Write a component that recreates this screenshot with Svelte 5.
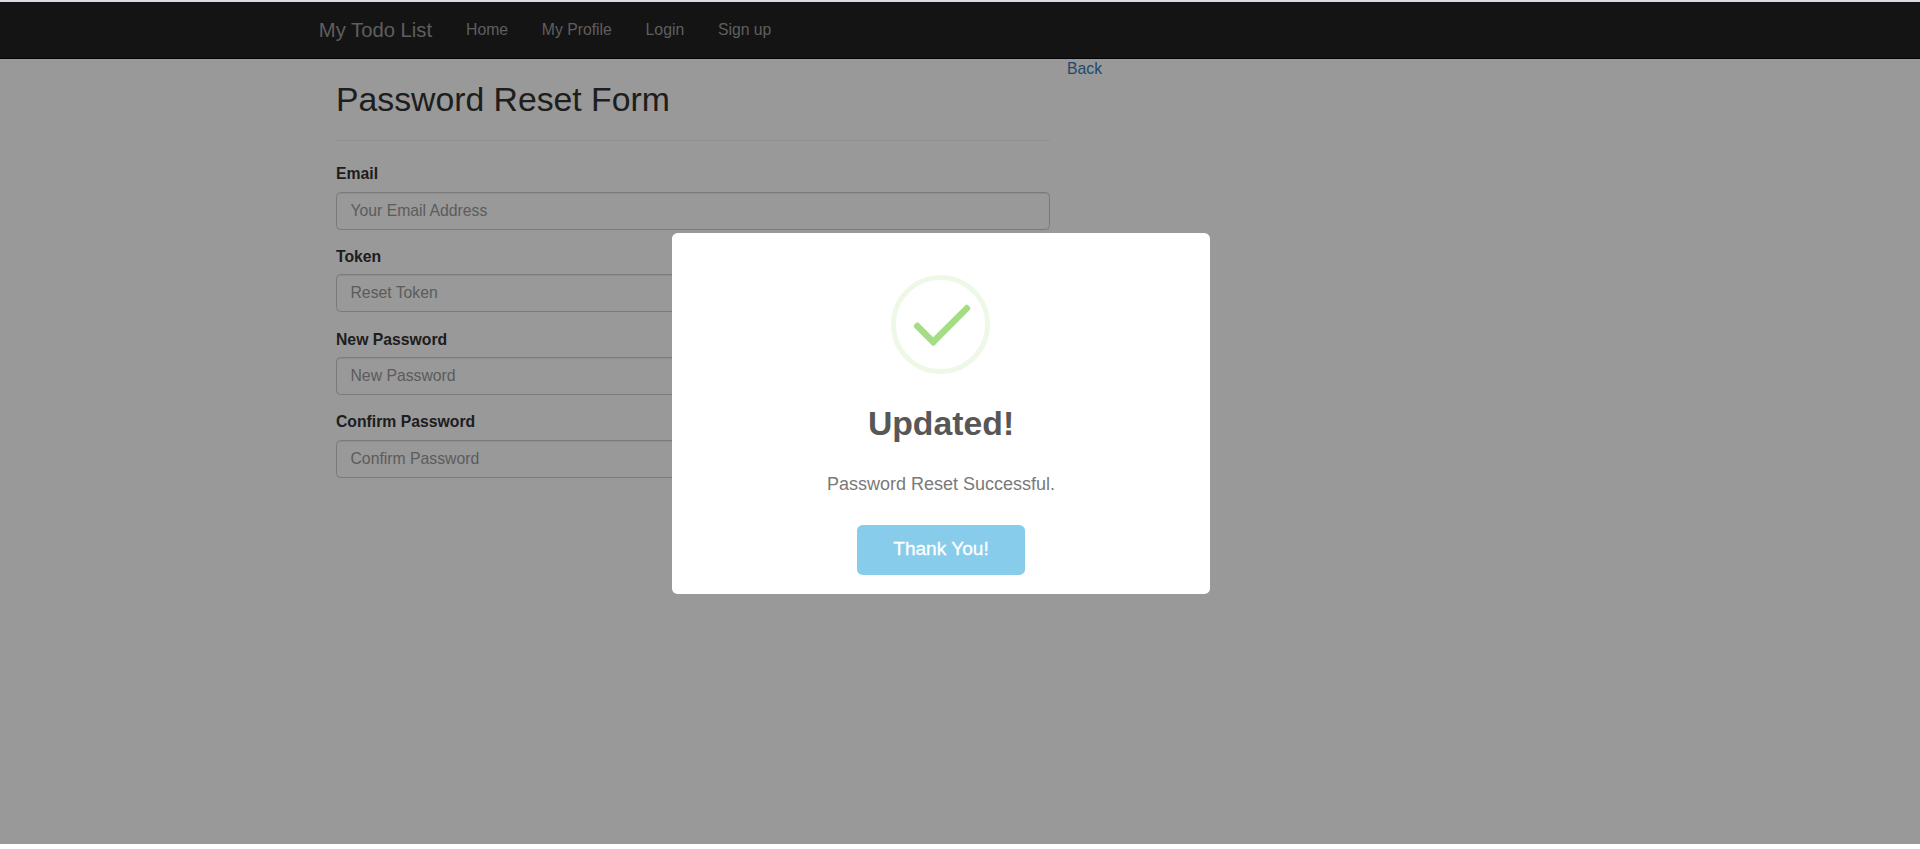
<script>
  const links = ['Home', 'My Profile', 'Login', 'Sign up'];
  const fields = [
    { id: 'email', label: 'Email', placeholder: 'Your Email Address' },
    { id: 'token', label: 'Token', placeholder: 'Reset Token' },
    { id: 'password', label: 'New Password', placeholder: 'New Password' },
    { id: 'confirm', label: 'Confirm Password', placeholder: 'Confirm Password' }
  ];
</script>

<div class="screen">
  <nav>
    <div class="container bar">
      <a class="brand" href="#top">My Todo List</a>
      {#each links as link}
        <a class="link" href="#top">{link}</a>
      {/each}
    </div>
  </nav>

  <main class="container">
    <form>
      <h2>Password Reset Form</h2>
      <hr />
      {#each fields as field}
        <div class="group">
          <label for={field.id}>{field.label}</label>
          <input id={field.id} type="text" placeholder={field.placeholder} />
        </div>
      {/each}
    </form>
    <aside><a href="#top">Back</a></aside>
  </main>

  <div class="overlay">
    <div class="modal" role="dialog">
      <svg width="99" height="99" viewBox="-4 -4 88 88">
        <circle cx="40" cy="40" r="41.8" fill="none" stroke="#edf8e7" stroke-width="4.4" />
        <g fill="#a5dc86">
          <rect x="13.7" y="45.6" width="25.6" height="5.8" rx="2" transform="rotate(45 26.5 48.5)" />
          <rect x="24.7" y="37.6" width="47.6" height="5.8" rx="2" transform="rotate(-45 48.5 40.5)" />
        </g>
      </svg>
      <h3>Updated!</h3>
      <p>Password Reset Successful.</p>
      <button type="button">Thank You!</button>
    </div>
  </div>
</div>

<style>
  :global(body) {
    margin: 0;
    background: #fff;
  }
  .screen, .screen * {
    box-sizing: border-box;
  }
  .screen {
    position: relative;
    height: 844px;
    border-top: 2px solid #d9dce3;
    background: #fff;
    overflow: hidden;
    color: #333;
    font: 15.75px/22.5px "Liberation Sans", Arial, sans-serif;
  }
  .container {
    width: 1316px;
    margin: 0 auto;
    padding: 0 17px;
    display: flex;
  }
  nav {
    height: 57px;
    background: #222;
    border-bottom: 1px solid #080808;
  }
  .bar {
    height: 56px;
    align-items: center;
  }
  .bar a {
    color: #9d9d9d;
    text-decoration: none;
  }
  .brand {
    margin-left: -0.2px;
    font-size: 20.25px;
    padding-right: 17px;
  }
  .link {
    padding: 0 16.9px;
  }
  form {
    width: 748px;
    padding: 0 17px;
  }
  h2 {
    margin: 22px 0 11px;
    font-size: 33.75px;
    line-height: 37px;
    font-weight: normal;
  }
  hr {
    margin: 22px 0 22.3px;
    border: 0;
    border-top: 1px solid #eee;
  }
  .group {
    height: 82.65px;
  }
  label {
    display: block;
    margin-bottom: 6px;
    line-height: 22.5px;
    font-weight: bold;
  }
  input {
    display: block;
    width: 100%;
    height: 38px;
    padding: 6px 13.5px;
    border: 1px solid #ccc;
    border-radius: 4.5px;
    background: #fff;
    box-shadow: inset 0 1px 1px rgba(0, 0, 0, 0.075);
    font: inherit;
  }
  input::placeholder {
    color: #999;
    opacity: 1;
  }
  aside {
    line-height: 20px;
  }
  aside a {
    color: #337ab7;
    text-decoration: none;
  }
  .overlay {
    position: absolute;
    inset: 0;
    padding: 231px 0 0 672px;
    background: rgba(0, 0, 0, 0.4);
  }
  .modal {
    width: 538px;
    height: 361px;
    padding-top: 42px;
    display: flex;
    flex-direction: column;
    align-items: center;
    border-radius: 5.6px;
    background: #fff;
  }
  svg {
    margin-right: 1px;
  }
  h3 {
    margin: 27px 0 0;
    color: #575757;
    font-size: 33.75px;
    line-height: 45px;
    font-weight: 600;
  }
  p {
    margin: 27px 0 0;
    color: #797979;
    font-size: 18px;
    line-height: 22px;
  }
  button {
    width: 168px;
    height: 50px;
    margin-top: 30px;
    padding: 0 0 2px;
    border: 0;
    border-radius: 5.6px;
    background: #87cdeb;
    color: #fff;
    font: 19.1px "Liberation Sans", Arial, sans-serif;
    -webkit-text-stroke: 0.3px #fff;
  }
</style>
